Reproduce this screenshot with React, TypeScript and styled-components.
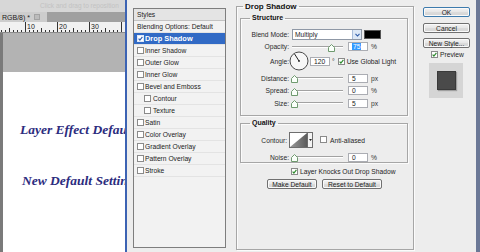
import React from 'react';
import styled, { createGlobalStyle } from 'styled-components';

const GlobalStyle = createGlobalStyle`
  * { box-sizing: border-box; }
  html, body { margin: 0; padding: 0; }
  body {
    width: 480px;
    height: 252px;
    overflow: hidden;
    background: #ededed;
    font-family: "Liberation Sans", Arial, sans-serif;
  }
`;

const Screen = styled.div`
  display: flex;
  width: 480px;
  height: 252px;
  overflow: hidden;
`;

/* ---------- document window behind the dialog ---------- */

const Workspace = styled.div`
  width: 125px;
  flex: none;
  display: flex;
  flex-direction: column;
  background: #b2b2b2;
  overflow: hidden;
`;

const HintBar = styled.div`
  height: 12px;
  background: #d7d7d7;
  color: #c2c2c2;
  font-size: 6.5px;
  line-height: 12px;
  padding-left: 40px;
  white-space: nowrap;
`;

const TabBar = styled.div`
  height: 10px;
  display: flex;
  background: #a0a0a0;
`;

const DocTab = styled.div`
  width: 47px;
  display: flex;
  align-items: center;
  gap: 4px;
  padding-left: 2px;
  background: #cdcdcd;
  color: #1a1a1a;
  font-size: 7px;
  white-space: nowrap;
  overflow: hidden;
`;

const TabClose = styled.span`
  width: 6px;
  height: 6px;
  flex: none;
  border: 1px solid #a3a3a3;
  background: #bcbcbc;
`;

const RulerSvg = styled.svg`
  display: block;
  flex: none;
  background: #f1f1f1;
  border-bottom: 1px solid #8c8c8c;
`;

const DocBody = styled.div`
  flex: 1;
  display: flex;
  flex-direction: column;
  border-left: 3px solid #7a7a7a;
`;

const Pasteboard = styled.div`
  height: 39px;
  flex: none;
  background: #b3b3b3;
`;

const Canvas = styled.div`
  flex: 1;
  background: #fff;
  padding: 50px 0 0 17px;
  display: flex;
  flex-direction: column;
  gap: 35px;
`;

const CanvasText = styled.div<{ $indent: number }>`
  font-family: "Liberation Serif", "Times New Roman", serif;
  font-style: italic;
  font-weight: bold;
  font-size: 13.5px;
  line-height: 16px;
  color: #2c2c7e;
  white-space: nowrap;
  padding-left: ${p => p.$indent}px;
`;

/* ---------- layer style dialog ---------- */

const Dialog = styled.div`
  flex: 1;
  display: flex;
  align-items: flex-start;
  background: #ededed;
  border-left: 2px solid #3c63b3;
  border-right: 4px solid #6b7896;
  font-size: 6.7px;
  color: #1e1e1e;
`;

const StylesPanel = styled.div`
  width: 93px;
  height: 240px;
  margin: 8px 0 0 6px;
  flex: none;
  border: 1px solid #7e7e7e;
  background: #f2f2f2;
  display: flex;
  flex-direction: column;
`;

const StylesHeader = styled.div`
  height: 12px;
  line-height: 11px;
  padding-left: 3px;
  background: #e4e4e4;
  border-bottom: 1px solid #c2c2c2;
`;

const StyleRow = styled.div<{ $selected?: boolean; $indent?: boolean }>`
  height: 12px;
  flex: none;
  display: flex;
  align-items: center;
  gap: ${p => (p.$indent ? 2 : 1)}px;
  padding-left: ${p => (p.$indent ? 10 : 3)}px;
  border-bottom: 1px solid #e3e3e3;
  background: ${p => (p.$selected ? '#316ac5' : 'transparent')};
  color: ${p => (p.$selected ? '#fff' : '#222')};
  font-weight: ${p => (p.$selected ? 'bold' : 'normal')};
  font-size: ${p => (p.$selected ? '7.4px' : 'inherit')};
  white-space: nowrap;
`;

const Group = styled.fieldset<{ $w: number; $h?: number; $mt: number; $ml?: number; $pad: string }>`
  margin: ${p => p.$mt}px 0 0 ${p => p.$ml ?? 0}px;
  padding: ${p => p.$pad};
  width: ${p => p.$w}px;
  ${p => (p.$h ? `height: ${p.$h}px;` : '')}
  min-width: 0;
  flex: none;
  border: 1px solid #a6a6a6;
  box-shadow: inset 1px 1px 0 #fbfbfb, 1px 1px 0 #fbfbfb;
`;

const GroupTitle = styled.legend<{ $big?: boolean }>`
  margin-left: ${p => (p.$big ? 3 : 9)}px;
  padding: 0 2px;
  font-weight: bold;
  font-size: ${p => (p.$big ? 8 : 7)}px;
  line-height: ${p => (p.$big ? 9 : 8)}px;
  color: #111;
`;

const Row = styled.div<{ $h: number; $mt?: number; $pl?: number }>`
  display: flex;
  align-items: center;
  height: ${p => p.$h}px;
  margin-top: ${p => p.$mt ?? 0}px;
  padding-left: ${p => p.$pl ?? 0}px;
  white-space: nowrap;
`;

const Label = styled.span<{ $w?: number }>`
  width: ${p => p.$w ?? 48}px;
  margin-right: ${p => (p.$w ? 2 : 3)}px;
  text-align: right;
  color: #2a2a2a;
  flex: none;
`;

const Select = styled.div`
  width: 70px;
  height: 11px;
  display: flex;
  align-items: center;
  background: #fff;
  border: 1px solid #8f98a6;
  padding-left: 2px;
`;

const SelectText = styled.span`
  flex: 1;
`;

const SelectArrow = styled.span`
  width: 9px;
  height: 100%;
  display: flex;
  align-items: center;
  justify-content: center;
  background: #dde8f6;
  border-left: 1px solid #a9bddb;
`;

const Swatch = styled.div`
  width: 17px;
  height: 9px;
  margin-left: 2px;
  background: #000;
  border: 1px solid #555;
`;

const Track = styled.div`
  position: relative;
  width: 51px;
  height: 2px;
  border-top: 1px solid #a2a2a2;
  border-bottom: 1px solid #fff;
`;

const Thumb = styled.svg<{ $pos: number }>`
  position: absolute;
  top: -3px;
  left: calc(${p => p.$pos}% - 3px);
`;

const NumBox = styled.div<{ $ml?: number }>`
  width: 20px;
  height: 9px;
  margin-left: ${p => p.$ml ?? 5}px;
  background: #fff;
  border: 1px solid #abadb3;
  display: flex;
  align-items: center;
  padding-left: 3px;
  color: #222;
`;

const Selected = styled.span`
  background: #3399ff;
  color: #fff;
  padding: 0 1px;
  line-height: 7px;
`;

const Unit = styled.span<{ $ml?: number }>`
  margin-left: ${p => p.$ml ?? 3}px;
  color: #333;
`;

const Dial = styled.svg`
  margin-left: -3px;
  flex: none;
`;

const CheckText = styled.span<{ $ml?: number }>`
  margin-left: ${p => p.$ml ?? 2}px;
`;

const ContourPick = styled.div`
  display: flex;
  height: 16px;
  border: 1px solid #6e6e6e;
  background: #fff;
`;

const ContourArrow = styled.span`
  width: 5px;
  border-left: 1px solid #6e6e6e;
  background: #f4f4f4;
  display: flex;
  align-items: center;
  justify-content: center;
`;

const ButtonRow = styled.div`
  display: flex;
  gap: 5px;
  margin-top: 3px;
  padding-left: 27px;
`;

const Button = styled.div<{ $w?: number; $def?: boolean; $mt?: number }>`
  ${p => (p.$w ? `width: ${p.$w}px;` : '')}
  height: 10px;
  margin-top: ${p => p.$mt ?? 0}px;
  display: flex;
  align-items: center;
  justify-content: center;
  border: 1px solid ${p => (p.$def ? '#3d7bad' : '#707070')};
  border-radius: 2px;
  background: linear-gradient(#f3f3f3, #e6e6e6 50%, #dcdcdc 51%, #d4d4d4);
  box-shadow: inset 0 0 0 1px #fafafa;
  color: #1e1e1e;
  white-space: nowrap;
`;

const Side = styled.div`
  width: 47px;
  margin-left: 9px;
  flex: none;
  display: flex;
  flex-direction: column;
`;

const PreviewToggle = styled.div`
  display: flex;
  align-items: center;
  height: 7px;
  margin-top: 3px;
  padding-left: 8px;
`;

const PreviewBox = styled.div`
  width: 34px;
  height: 35px;
  margin: 5px 0 0 6px;
  background: #d5d5d5;
  display: flex;
  align-items: center;
  justify-content: center;
`;

const PreviewSquare = styled.div`
  width: 19px;
  height: 19px;
  background: #4a4a4a;
  border: 1px solid #3a3a3a;
  box-shadow: 1px 1px 1px rgba(0, 0, 0, 0.25);
`;

const Box = styled.span<{ $inv?: boolean }>`
  width: 7px;
  height: 7px;
  flex: none;
  display: inline-flex;
  align-items: center;
  justify-content: center;
  border: 1px solid ${p => (p.$inv ? '#dfe8f8' : '#8a8a8a')};
  background: #fff;
`;

function CheckBox({ on, inv }: { on?: boolean; inv?: boolean }) {
  return (
    <Box $inv={inv}>
      {on && (
        <svg width="5" height="5" viewBox="0 0 5 5">
          <path d="M0.6 2.6 L1.9 4 L4.4 0.8" fill="none" stroke={inv ? '#2f5fb3' : '#2e8b2e'} strokeWidth="1.2" />
        </svg>
      )}
    </Box>
  );
}

function Slider({ pos }: { pos: number }) {
  return (
    <Track>
      <Thumb $pos={pos} width="7" height="8" viewBox="0 0 7 8">
        <path d="M3.5 0.5 L6.5 3.5 L6.5 7.5 L0.5 7.5 L0.5 3.5 Z" fill="#fafffa" stroke="#6f9a6f" strokeWidth="1" />
      </Thumb>
    </Track>
  );
}

function Ruler() {
  const ticks = [];
  for (let x = 1; x < 125; x += 4) {
    const major = (x - 25) % 32 === 0;
    const half = (x - 9) % 32 === 0;
    const h = major ? 10 : half ? 4 : 2;
    ticks.push(<line key={x} x1={x + 0.5} x2={x + 0.5} y1={10 - h} y2={10} stroke="#333" strokeWidth="1" />);
  }
  return (
    <RulerSvg width="125" height="11" viewBox="0 0 125 10">
      {ticks}
      {['10', '20', '30'].map((n, i) => (
        <text key={n} x={27 + i * 32} y="7" fontSize="7" fill="#222" fontFamily="Liberation Sans, Arial, sans-serif">
          {n}
        </text>
      ))}
    </RulerSvg>
  );
}

const styleItems: { name: string; on?: boolean; selected?: boolean; indent?: boolean }[] = [
  { name: 'Drop Shadow', on: true, selected: true },
  { name: 'Inner Shadow' },
  { name: 'Outer Glow' },
  { name: 'Inner Glow' },
  { name: 'Bevel and Emboss' },
  { name: 'Contour', indent: true },
  { name: 'Texture', indent: true },
  { name: 'Satin' },
  { name: 'Color Overlay' },
  { name: 'Gradient Overlay' },
  { name: 'Pattern Overlay' },
  { name: 'Stroke' },
];

export default function App() {
  return (
    <>
      <GlobalStyle />
      <Screen>
        <Workspace>
          <HintBar>Click and drag to reposition</HintBar>
          <TabBar>
            <DocTab>
              RGB/8) *<TabClose />
            </DocTab>
          </TabBar>
          <Ruler />
          <DocBody>
            <Pasteboard />
            <Canvas>
              <CanvasText $indent={0}>Layer Effect Default</CanvasText>
              <CanvasText $indent={2}>New Default Setting</CanvasText>
            </Canvas>
          </DocBody>
        </Workspace>

        <Dialog>
          <StylesPanel>
            <StylesHeader>Styles</StylesHeader>
            <StyleRow>Blending Options: Default</StyleRow>
            {styleItems.map(s => (
              <StyleRow key={s.name} $selected={s.selected} $indent={s.indent}>
                <CheckBox on={s.on} inv={s.selected} />
                {s.name}
              </StyleRow>
            ))}
          </StylesPanel>

          <Group $w={178} $h={248} $mt={2} $ml={10} $pad="0 3px">
            <GroupTitle $big>Drop Shadow</GroupTitle>

            <Group $w={168} $mt={3} $pad="7px 0 7px 0">
              <GroupTitle>Structure</GroupTitle>
              <Row $h={11}>
                <Label>Blend Mode:</Label>
                <Select>
                  <SelectText>Multiply</SelectText>
                  <SelectArrow>
                    <svg width="5" height="4" viewBox="0 0 5 4">
                      <path d="M0.5 0.8 L2.5 3 L4.5 0.8" fill="none" stroke="#2d5aa8" strokeWidth="1.1" />
                    </svg>
                  </SelectArrow>
                </Select>
                <Swatch />
              </Row>
              <Row $h={9} $mt={2}>
                <Label>Opacity:</Label>
                <Slider pos={77} />
                <NumBox>
                  <Selected>75</Selected>
                </NumBox>
                <Unit>%</Unit>
              </Row>
              <Row $h={20}>
                <Label>Angle:</Label>
                <Dial width="20" height="20" viewBox="0 0 20 20">
                  <circle cx="10" cy="10" r="9" fill="#f7f7f7" stroke="#4a4a4a" strokeWidth="1" />
                  <line x1="10" y1="10" x2="5.6" y2="3" stroke="#222" strokeWidth="1" />
                  <circle cx="10" cy="10" r="0.9" fill="#222" />
                </Dial>
                <NumBox $ml={1}>120</NumBox>
                <Unit $ml={2}>°</Unit>
                <Unit $ml={3}>
                  <CheckBox on />
                </Unit>
                <CheckText>Use Global Light</CheckText>
              </Row>
              <Row $h={10} $mt={2}>
                <Label>Distance:</Label>
                <Slider pos={3} />
                <NumBox>5</NumBox>
                <Unit>px</Unit>
              </Row>
              <Row $h={10} $mt={2.5}>
                <Label>Spread:</Label>
                <Slider pos={3} />
                <NumBox>0</NumBox>
                <Unit>%</Unit>
              </Row>
              <Row $h={10} $mt={2.5}>
                <Label>Size:</Label>
                <Slider pos={3} />
                <NumBox>5</NumBox>
                <Unit>px</Unit>
              </Row>
            </Group>

            <Group $w={168} $mt={3} $pad="5px 0 0 0">
              <GroupTitle>Quality</GroupTitle>
              <Row $h={16}>
                <Label $w={46}>Contour:</Label>
                <ContourPick>
                  <svg width="17" height="14" viewBox="0 0 17 14">
                    <defs>
                      <linearGradient id="cg" x1="0" y1="0" x2="1" y2="0">
                        <stop offset="0" stopColor="#9a9a9a" />
                        <stop offset="1" stopColor="#5c5c5c" />
                      </linearGradient>
                    </defs>
                    <polygon points="0,14 17,0 17,14" fill="url(#cg)" />
                  </svg>
                  <ContourArrow>
                    <svg width="3" height="2" viewBox="0 0 3 2">
                      <path d="M0 0 L3 0 L1.5 2 Z" fill="#222" />
                    </svg>
                  </ContourArrow>
                </ContourPick>
                <Unit $ml={7}>
                  <CheckBox />
                </Unit>
                <CheckText $ml={3}>Anti-aliased</CheckText>
              </Row>
              <Row $h={10} $mt={4}>
                <Label>Noise:</Label>
                <Slider pos={3} />
                <NumBox>0</NumBox>
                <Unit>%</Unit>
              </Row>
            </Group>

            <Row $h={9} $mt={4} $pl={51}>
              <CheckBox on />
              <CheckText>Layer Knocks Out Drop Shadow</CheckText>
            </Row>
            <ButtonRow>
              <Button $w={50}>Make Default</Button>
              <Button $w={60}>Reset to Default</Button>
            </ButtonRow>
          </Group>

          <Side>
            <Button $def $mt={7}>OK</Button>
            <Button $mt={6}>Cancel</Button>
            <Button $mt={5}>New Style...</Button>
            <PreviewToggle>
              <CheckBox on />
              <CheckText>Preview</CheckText>
            </PreviewToggle>
            <PreviewBox>
              <PreviewSquare />
            </PreviewBox>
          </Side>
        </Dialog>
      </Screen>
    </>
  );
}
